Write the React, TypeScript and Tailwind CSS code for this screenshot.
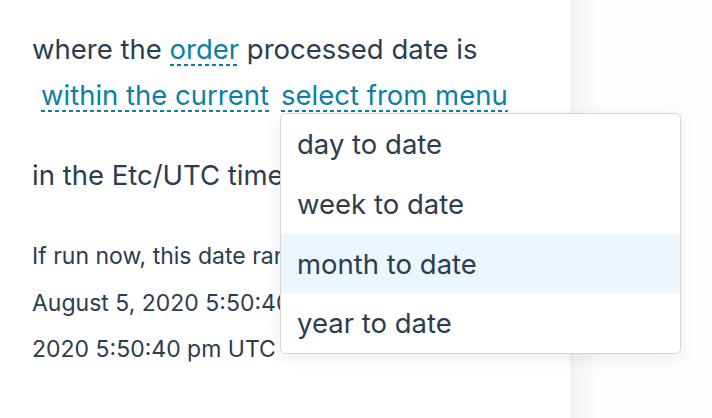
import React from "react";

const dash =
  "bg-[repeating-linear-gradient(to_right,#0b7fa5_0px,#0b7fa5_4px,transparent_4px,transparent_7px)] bg-[length:100%_2px] bg-no-repeat bg-bottom";

export default function App() {
  return (
    <div className="flex w-[712px] h-[418px] overflow-hidden bg-white text-[#2b3d4f] font-['Inter',sans-serif]">
      <div className="w-[570px] shrink-0 bg-white pl-[32px] pt-[26px]">
        <div className="text-[27.5px] leading-[46px]">
          <div>
            where the{" "}
            <span className={`text-[#0b7fa5] ${dash}`}>order</span>{" "}
            processed date is
          </div>
          <div className="pl-[9px] whitespace-nowrap">
            <span className={`text-[#0b7fa5] ${dash}`}>within the current</span>
            <span className="inline-block w-[12px]" />
            <span className="relative">
              <span className={`text-[#0b7fa5] ${dash}`}>select from menu</span>
              <div className="absolute left-[-1px] top-[calc(100%+1px)] w-[401px] rounded-[6px] border border-[#d6d6d6] bg-white shadow-[0_4px_16px_rgba(0,0,0,0.08)] overflow-hidden z-10 leading-[60px]">
                <div className="h-[60px] pl-[16px]">day to date</div>
                <div className="h-[60px] pl-[16px]">week to date</div>
                <div className="h-[59px] pl-[16px] bg-[#ebf6fd]">month to date</div>
                <div className="h-[60px] pl-[16px]">year to date</div>
              </div>
            </span>
          </div>
          <div className="mt-[34px]">in the Etc/UTC timezone.</div>
        </div>
        <div className="mt-[35px] text-[23px] leading-[46.5px]">
          <div>If run now, this date range will be from</div>
          <div>August 5, 2020 5:50:40 pm UTC to August 5,</div>
          <div>2020 5:50:40 pm UTC</div>
        </div>
      </div>
      <div className="flex-1 bg-[linear-gradient(to_right,#f2f2f2_0px,#f7f7f7_12px,#fdfdfd_26px,#fefefe_100%)]" />
    </div>
  );
}
